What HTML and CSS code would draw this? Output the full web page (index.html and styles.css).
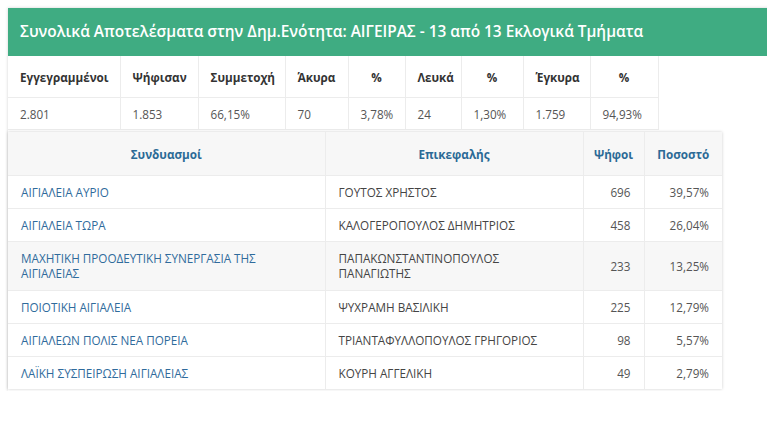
FILE: index.html
```html
<!DOCTYPE html>
<html lang="el">
<head>
<meta charset="utf-8">
<link rel="stylesheet" href="styles.css">
</head>
<body>
<div class="panel">
  <div class="panel-heading">Συνολικά Αποτελέσματα στην Δημ.Ενότητα: ΑΙΓΕΙΡΑΣ - 13 από 13 Εκλογικά Τμήματα</div>
  <div class="panel-body">
    <table class="summary">
      <colgroup>
        <col class="c1"><col class="c2"><col class="c3"><col class="c4"><col class="c5"><col class="c6"><col class="c7"><col class="c8"><col class="c9">
      </colgroup>
      <thead>
        <tr><th>Εγγεγραμμένοι</th><th>Ψήφισαν</th><th>Συμμετοχή</th><th>Άκυρα</th><th class="ctr">%</th><th>Λευκά</th><th class="ctr">%</th><th>Έγκυρα</th><th class="ctr">%</th></tr>
      </thead>
      <tbody>
        <tr><td>2.801</td><td>1.853</td><td>66,15%</td><td>70</td><td>3,78%</td><td>24</td><td>1,30%</td><td>1.759</td><td>94,93%</td></tr>
      </tbody>
    </table>
    <div class="results-box">
      <table class="results">
        <colgroup><col class="r1"><col class="r2"><col class="r3"><col class="r4"></colgroup>
        <thead>
          <tr><th>Συνδυασμοί</th><th>Επικεφαλής</th><th>Ψήφοι</th><th>Ποσοστό</th></tr>
        </thead>
        <tbody>
          <tr><td class="party">ΑΙΓΙΑΛΕΙΑ ΑΥΡΙΟ</td><td>ΓΟΥΤΟΣ ΧΡΗΣΤΟΣ</td><td class="num">696</td><td class="num">39,57%</td></tr>
          <tr><td class="party">ΑΙΓΙΑΛΕΙΑ ΤΩΡΑ</td><td>ΚΑΛΟΓΕΡΟΠΟΥΛΟΣ ΔΗΜΗΤΡΙΟΣ</td><td class="num">458</td><td class="num">26,04%</td></tr>
          <tr class="hl"><td class="party">ΜΑΧΗΤΙΚΗ ΠΡΟΟΔΕΥΤΙΚΗ ΣΥΝΕΡΓΑΣΙΑ ΤΗΣ ΑΙΓΙΑΛΕΙΑΣ</td><td>ΠΑΠΑΚΩΝΣΤΑΝΤΙΝΟΠΟΥΛΟΣ ΠΑΝΑΓΙΩΤΗΣ</td><td class="num">233</td><td class="num">13,25%</td></tr>
          <tr><td class="party">ΠΟΙΟΤΙΚΗ ΑΙΓΙΑΛΕΙΑ</td><td>ΨΥΧΡΑΜΗ ΒΑΣΙΛΙΚΗ</td><td class="num">225</td><td class="num">12,79%</td></tr>
          <tr><td class="party">ΑΙΓΙΑΛΕΩΝ ΠΟΛΙΣ ΝΕΑ ΠΟΡΕΙΑ</td><td>ΤΡΙΑΝΤΑΦΥΛΛΟΠΟΥΛΟΣ ΓΡΗΓΟΡΙΟΣ</td><td class="num">98</td><td class="num">5,57%</td></tr>
          <tr><td class="party">ΛΑΪΚΗ ΣΥΣΠΕΙΡΩΣΗ ΑΙΓΙΑΛΕΙΑΣ</td><td>ΚΟΥΡΗ ΑΓΓΕΛΙΚΗ</td><td class="num">49</td><td class="num">2,79%</td></tr>
        </tbody>
      </table>
    </div>
  </div>
</div>
</body>
</html>
```

FILE: styles.css
```css
html, body {
  margin: 0;
  padding: 0;
  background: #fff;
  overflow: hidden;
}
body {
  font-family: "Open Sans", "Noto Sans", sans-serif;
  font-size: 11.7px;
  color: #333;
}
.panel {
  margin: 8px 0 0 8px;
  width: 780px;
  box-shadow: 0 0 3px rgba(0, 0, 0, 0.18);
}
.panel-heading {
  background: #3fac82;
  color: #fff;
  height: 48px;
  line-height: 48px;
  padding: 0 12px;
  font-size: 15.4px;
  font-weight: 600;
  white-space: nowrap;
}
.panel-body {
  padding-bottom: 2px;
}
table {
  border-collapse: collapse;
  table-layout: fixed;
}
.summary {
  width: 650px;
}
.summary th, .summary td {
  border: 1px solid #ececec;
  padding: 0 12px;
  text-align: left;
  white-space: nowrap;
}
.summary th {
  height: 41px;
  font-weight: 700;
  color: #333;
}
.summary td {
  height: 31px;
  color: #555;
}
.summary .ctr { text-align: center; }
.summary th:first-child, .summary td:first-child { border-left: 0; }
.summary thead th { border-top: 0; }
.c1 { width: 112px; }
.c2 { width: 78px; }
.c3 { width: 87px; }
.c4 { width: 63px; }
.c5 { width: 57px; }
.c6 { width: 56px; }
.c7 { width: 62px; }
.c8 { width: 67px; }
.c9 { width: 68px; }
.results-box {
  width: 714px;
  margin-top: 2px;
  box-shadow: 0 0 3px rgba(0, 0, 0, 0.2);
}
.results {
  width: 714px;
}
.results th, .results td {
  border-top: 1px solid #ececec;
  border-left: 1px solid #ececec;
  padding: 0 13px;
  vertical-align: middle;
}
.results th:first-child, .results td:first-child { border-left: 0; }
.results thead th {
  border-top: 0;
  background: #f7f7f7;
  color: #2b6a96;
  font-weight: 700;
  text-align: center;
  height: 43px;
}
.results thead th:nth-child(3), .results thead th:nth-child(4) { padding: 0 10px; }
.results td {
  height: 32px;
  line-height: 15px;
  color: #444;
}
.results tr.hl td {
  background: #f7f7f7;
  height: 48px;
}
.results td.party { color: #2f6b9c; }
.results td.num { text-align: right; color: #555; }
.r1 { width: 317px; }
.r2 { width: 258px; }
.r3 { width: 61px; }
.r4 { width: 78px; }
```
